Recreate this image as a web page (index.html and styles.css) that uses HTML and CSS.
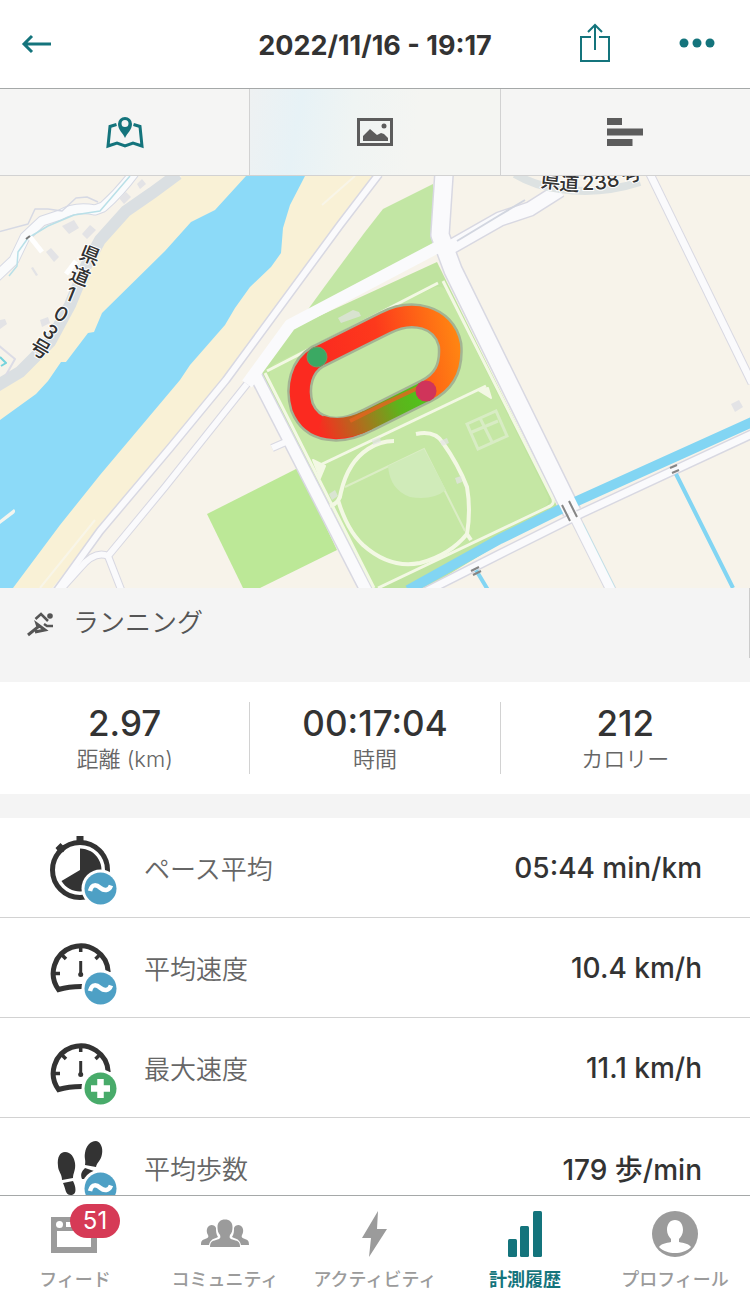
FILE: index.html
```html
<!DOCTYPE html>
<html lang="ja">
<head>
    <meta charset="UTF-8">
    <meta name="viewport" content="width=device-width, initial-scale=1.0">
    <title>計測履歴</title>
    <link rel="stylesheet" href="styles.css">
</head>
<body>
    <header class="topbar">
        <button class="icon-button" aria-label="戻る">
            <svg width="34" height="24" viewBox="0 0 34 24" fill="none" stroke="currentColor" stroke-width="3">
                <path d="M31 12H4M12 4L4 12l8 8"/>
            </svg>
        </button>
        <h1>2022/11/16 - 19:17</h1>
        <div class="actions">
            <button class="icon-button" aria-label="共有">
                <svg width="32" height="42" viewBox="0 0 32 42" fill="none" stroke="currentColor" stroke-width="2">
                    <path d="M12 14H2v24h28V14H20M16 27V3M9 9l7-7 7 7"/>
                </svg>
            </button>
            <button class="icon-button" aria-label="メニュー">
                <svg width="36" height="14" viewBox="0 0 36 14" fill="currentColor">
                    <circle cx="5" cy="6" r="4.500"/><circle cx="18" cy="6" r="4.500"/><circle cx="31" cy="6" r="4.500"/>
                </svg>
            </button>
        </div>
    </header>

    <main>
        <div class="tabs">
            <button class="tab active" aria-label="マップ">
                <svg width="40" height="34" viewBox="0 0 40 34" fill="none" stroke="currentColor" stroke-width="3">
                    <path d="M11.500 9.500L5 11.500 3 31l9-3 8 3 8-3 9 3-2-19.500-6.500-2"/>
                    <path d="M20 23c-2-5-7-8-7-14a7 7 0 0 1 14 0c0 6-5 9-7 14zM20 5a3.500 3.500 0 1 0 0 7 3.500 3.500 0 0 0 0-7z" fill="currentColor" fill-rule="evenodd" stroke="none"/>
                </svg>
            </button>
            <button class="tab photo" aria-label="写真">
                <svg width="36" height="28" viewBox="0 0 36 28" fill="currentColor">
                    <path d="M0 0h36v28H0zM3 3v22h30V3z" fill-rule="evenodd"/>
                    <path d="M6 23v-5l7-7 7 6 4-2 3 1 4 4v3z"/>
                    <circle cx="27" cy="8" r="2.500"/>
                </svg>
            </button>
            <button class="tab" aria-label="ラップ">
                <svg width="36" height="28" viewBox="0 0 36 28" fill="currentColor">
                    <path d="M0 0h15v7H0zM0 10.500h36v7H0zM0 21h25.500v7H0z"/>
                </svg>
            </button>
        </div>

        <svg class="map" viewBox="0 176 750 412" preserveAspectRatio="xMidYMid slice" role="img" aria-label="コース">
            <defs>
                <linearGradient id="fast" gradientUnits="userSpaceOnUse" x1="317" y1="357" x2="455" y2="330">
                    <stop offset="0" stop-color="#fb2a20"/>
                    <stop offset=".45" stop-color="#fd391c"/>
                    <stop offset=".8" stop-color="#fe6a15"/>
                    <stop offset="1" stop-color="#ff8412"/>
                </linearGradient>
                <linearGradient id="slow" gradientUnits="userSpaceOnUse" x1="424" y1="392" x2="318" y2="428">
                    <stop offset="0" stop-color="#4fc41a"/>
                    <stop offset=".25" stop-color="#5cb41c"/>
                    <stop offset=".6" stop-color="#a8741d"/>
                    <stop offset="1" stop-color="#fb2a20"/>
                </linearGradient>
            </defs>

            <rect y="176" width="750" height="412" fill="#f7f3ea"/>

            <!-- river and its banks -->
            <path class="sand" d="M182 176H378L250 345 160 460 52 588H0V385L40 355 58 315 100 240 125 215z"/>
            <path class="water" d="M246 176L215 210 191 222 165 251 102 313 94 332 88 333 66 362 61 362 48 381 36 394 0 420V588H13L60 525 100 475 180 380 190 365 225 325 235 308 250 287 271 267 281 253 283 228 290 205 305 176z"/>
            <path d="M0 520L14 509q3 3-2 6L0 524z" fill="#f4f5ef"/>
            <path d="M322 205L355 176M40 588L95 520" stroke="#f8f5e8" stroke-width="2"/>

            <!-- prefectural road 103 and the stream -->
            <path d="M178 174L152 193 126 211 100 240 86 266 70 305 50 342 20 372-5 387" fill="none" stroke="#dadfe2" stroke-width="12"/>
            <g fill="none" stroke-linejoin="round">
                <path d="M134 173Q120 192 103 207L95 210Q75 206 60 215L42 221 25 237 14 260-5 278" stroke="#d6d9e4" stroke-width="11"/>
                <path d="M134 173Q120 192 103 207L95 210Q75 206 60 215L42 221 25 237 14 260-5 278" stroke="#fafbfc" stroke-width="9"/>
                <path d="M-2 232L28 224 35 209 48 209 62 211 76 198 87 197 98 202" stroke="#d6d9e4" stroke-width="1.500"/>
                <path d="M130 176L100 211 74 215 48 226 28 238 18 252 17 266 9 276" stroke="#b9e0e8" stroke-width="1.500"/>
                <path d="M0 357l6 6-5 3" stroke="#75d3dc" stroke-width="2"/>
                <path d="M30 237l12 15M66 274l10-13" stroke="#fff" stroke-width="5"/>
                <path d="M-2 345L15 359 6 375" stroke="#dcdce6" stroke-width="2"/>
            </g>
            <path d="M26 239l4-3" stroke="#777" stroke-width="2"/>
            <path class="building" d="M62 226l12-6 5 8-10 6zM82 234l8-9 6 5-9 9zM119 198l7-6 5 5-7 7zM137 184l5-5 4 5-6 5zM46 252l5-4 8 9-5 5zM0 320l5-1 2 5-7 5zM31 268l2-1 5 8-2 1zM40 320l8-3 2 6-8 4z"/>

            <!-- fields -->
            <path d="M433 184L383 209 365 232 325 286 304 315 433 247z" fill="#c2e6a4"/>
            <path d="M207 514L298 468 337 550 260 588H243z" fill="#bce897"/>
            <path d="M293 328L437 262 558 508 420 592H366L261 372z" fill="#bfe39f"/>
            <path d="M270 372Q270 366 276 363L433 288Q442 284 447 292L548 496Q551 503 544 507L378 588H370L270 382z" fill="#c5e7a4"/>

            <!-- roads -->
            <g class="road-edge">
                <path d="M379 174L340 225 226 380 170 448 100 531 56 592" stroke-width="9"/>
                <path d="M438 247L290 325 247 384 165 487 108 556 M108 556L122 592 M108 556Q95 550 80 568L62 588" stroke-width="8"/>
                <path d="M255 374L367 592" stroke-width="14"/>
                <path d="M449 248L500 219 530 209 560 190" stroke-width="16"/>
                <path d="M650 174L752 383" stroke-width="9"/>
                <path d="M444 174L440 235 453 270 572 512" stroke-width="20"/>
                <path d="M572 512L612 592" stroke-width="11"/>
                <path d="M752 434L580 514 500 554 425 592" stroke-width="10"/>
                <path d="M272 448l16-7" stroke-width="8"/>
            </g>
            <path d="M752 422L575 502 500 539 408 590" fill="none" stroke="#82d5f3" stroke-width="10"/>
            <path d="M676 474L733 588M476 570L488 590" stroke="#82d5f3" stroke-width="4"/>
            <path d="M582 524L614 588" stroke="#b7e4e9" stroke-width="3"/>
            <g class="road">
                <path d="M379 174L340 225 226 380 170 448 100 531 56 592" stroke-width="6"/>
                <path d="M247 384L165 487 108 556 M108 556L122 592 M108 556Q95 550 80 568L62 588" stroke-width="6"/>
                <path d="M438 247L290 325 247 384" stroke-width="12"/>
                <path d="M255 374L367 592" stroke-width="11"/>
                <path d="M449 248L500 219 530 209 560 190" stroke-width="13"/>
                <path d="M650 174L752 383" stroke-width="7"/>
                <path d="M444 174L440 235 453 270 572 512" stroke-width="17"/>
                <path d="M572 512L612 592" stroke-width="9"/>
                <path d="M752 434L580 514 500 554 425 592" stroke-width="7"/>
                <path d="M272 448l16-7" stroke-width="6"/>
            </g>
            <path d="M457 241L500 215 525 200" stroke="#d2d6e0" stroke-width="2" fill="none"/>
            <path d="M515 174Q535 186 560 189Q600 195 640 182" stroke="#dde2e2" stroke-width="8" fill="none"/>
            <path d="M562 505l8 16M569 501l8 16M670 468l7-3M672 473l7-3M471 571l8-4M473 575l8-4" stroke="#858585" stroke-width="2"/>
            <path class="building" d="M731 404l8-4 4 7-8 5z"/>

            <!-- paths inside the park -->
            <g class="path">
                <path d="M267 371L438 283M443 281L552 497Q556 504 548 507L378 588M265 373L374 588" stroke-width="3"/>
                <path d="M318 466L486 386" stroke-width="3"/>
                <path d="M330 506Q340 503 341 492 348 462 368 449 380 441 394 441M416 434Q435 430 443 443 458 464 467 487 471 510 467 534L471 540M338 500Q347 530 363 545 390 569 420 563 450 555 467 534" stroke-width="4"/>
                <path d="M313 460l12 6-5 12zM478 390l10-2 3 10z" fill="#f3f8e4" stroke-width="2"/>
            </g>
            <path d="M345 487L424 449 465 531" fill="none" stroke="#dbedc5" stroke-width="2"/>
            <path d="M424 449L388 466Q390 490 410 497 432 501 446 490z" fill="#d0ebb9"/>
            <path d="M467 424l29-13 11 25-29 13zM472 432l26-11M480 418l12 24" fill="none" stroke="#d8ecc4" stroke-width="3"/>
            <path class="building" d="M338 318l15-8 6 2 2 4-20 7zM329 494l6-4 3 6-6 4zM440 441l7-3 2 5-7 3zM455 478l6-2 1 6-5 2zM372 440l8-3 1 5-8 3z" opacity=".7"/>

            <!-- recorded track -->
            <path d="M317 357L385 323C412 309 444 316 450 345 452 368 444 382 426 391L368 420C340 435 312 432 302 407 296 386 302 366 317 357z" class="casing"/>
            <g class="track">
                <path d="M368 420C340 435 312 432 302 407 296 386 302 366 317 357" stroke="#fb2a20"/>
                <path d="M317 357L385 323C412 309 444 316 450 345 452 368 444 382 426 391" stroke="url(#fast)"/>
                <path d="M426 391L368 420C352 428 336 431 320 425" stroke="url(#slow)"/>
            </g>
            <path d="M422 386L384 404 350 421" stroke="#e6631f" stroke-width="4" fill="none" opacity=".8"/>
            <circle cx="317" cy="357" r="10" fill="#3ba963" stroke="#6c9a68" stroke-width="1"/>
            <circle cx="426" cy="391" r="10.500" fill="#d0345a"/>

            <text class="map-label" x="78 68 64 52 41 28" y="258 279 299 317 333 350" rotate="22 22 22 30 42 30">県道103号</text>
            <text class="map-label" x="540 559 582 595 608 624" y="187 190 190 190 188 184" rotate="6 3 0 -6 -12 -18">県道238号</text>
        </svg>

        <section class="activity">
            <svg width="28" height="28" viewBox="0 0 28 28" fill="none" stroke="currentColor" stroke-width="2.500">
                <path d="M8.500 10L14 5l7 7M17 15l3 2h6"/>
                <path d="M1 26l10-8-1-3 8 6-10 2" stroke-width="3"/>
                <circle cx="23" cy="7" r="2.800" fill="currentColor" stroke="none"/>
            </svg>
            <h2>ランニング</h2>
        </section>

        <section class="summary">
            <div class="stat"><strong>2.97</strong><span>距離 (km)</span></div>
            <div class="stat"><strong>00:17:04</strong><span>時間</span></div>
            <div class="stat"><strong>212</strong><span>カロリー</span></div>
        </section>

        <!-- shared badge and gauge shapes -->
        <svg class="sprite" aria-hidden="true">
            <symbol id="average" viewBox="0 0 72 76">
                <circle cx="52.500" cy="58.500" r="19" fill="#fff"/>
                <circle cx="52.500" cy="58.500" r="16" fill="#4ea0c5"/>
                <path d="M42 61C44 53 49 55 52.500 58S61 61 63 55.500" fill="none" stroke="#fff" stroke-width="4.500"/>
            </symbol>
            <symbol id="gauge" viewBox="0 0 72 76">
                <g fill="none" stroke="#333" stroke-width="5">
                    <path d="M60.200 42A27.500 27.500 0 1 0 10.500 59.500Q22 56 37 56.500"/>
                    <path d="M32.700 16v6M14 25l4 4M51.500 25l-4 4M5 43.500h7" stroke-width="3.500"/>
                    <path d="M32.700 31v13" stroke-width="3"/>
                </g>
                <circle cx="32.700" cy="44.500" r="2.500" fill="#333"/>
            </symbol>
        </svg>

        <ul class="details">
            <li>
                <svg width="72" height="76" viewBox="0 0 72 76">
                    <circle cx="32" cy="40" r="27.500" fill="none" stroke="#333" stroke-width="5"/>
                    <path d="M32 40V18.500A21.500 21.500 0 1 1 13.500 51z" fill="#333"/>
                    <path d="M28.500 6h7v8h-7zM7.500 18l5-5 5 5-2 4-4 1z" fill="#333"/>
                    <use href="#average"/>
                </svg>
                <span class="name">ペース平均</span>
                <span class="value">05:44 min/km</span>
            </li>
            <li>
                <svg width="72" height="76" viewBox="0 0 72 76">
                    <use href="#gauge"/>
                    <use href="#average"/>
                </svg>
                <span class="name">平均速度</span>
                <span class="value">10.4 km/h</span>
            </li>
            <li>
                <svg width="72" height="76" viewBox="0 0 72 76">
                    <use href="#gauge"/>
                    <circle cx="52.500" cy="58.500" r="19" fill="#fff"/>
                    <circle cx="52.500" cy="58.500" r="16" fill="#48ab6a"/>
                    <path d="M52.500 49v19M43 58.500h19" stroke="#fff" stroke-width="6.500"/>
                </svg>
                <span class="name">最大速度</span>
                <span class="value">11.1 km/h</span>
            </li>
            <li>
                <svg width="72" height="76" viewBox="0 0 72 76" fill="#333">
                    <path d="M10 36C9 27 12 22 17 22c6 0 9 5 10 11 1 7-2 10-2 15l-11 2c0-6-4-9-4-14zM15 53l10-2c3 6 4 13-1 14-7 1-6-6-9-12z"/>
                    <path d="M37 23c1-7 5-12 11-12 5 1 7 7 6 13-1 7-5 8-6 13l-11-2c1-5-1-7 0-12zM37 38l9 3-4 8h-8c-2-5 0-8 3-11z"/>
                    <use href="#average"/>
                </svg>
                <span class="name">平均歩数</span>
                <span class="value">179 歩/min</span>
            </li>
        </ul>
    </main>

    <nav class="bottom-nav">
        <a href="#feed">
            <svg width="48" height="48" viewBox="0 0 48 48" fill="currentColor">
                <path d="M0 7h46v36H0zM6 21v16h34V21z" fill-rule="evenodd"/>
                <circle cx="8.500" cy="14.500" r="3.500" fill="#fff"/><path d="M15 12h25v5H15z" fill="#fff"/>
            </svg>
            <span class="badge">51</span>
            <span>フィード</span>
        </a>
        <a href="#community">
            <svg width="48" height="48" viewBox="0 0 48 48" fill="currentColor">
                <path d="M9 37c0-5 2-6 6-7 4-1 5-2 4-5-2-2-2.500-5-2.500-8 0-5 3-7.500 7.500-7.500s7.500 2.500 7.500 7.500c0 3-.5 6-2.500 8-1 3 0 4 4 5s6 2 6 7z"/>
                <path d="M0 35c0-4 1-5 4-6s4-2 3-4c-2-3-2-9 3.500-10 2 0 4 1 4.500 3 0 3 0 6 2 9l-2 1c-4 1-6 3-7 7zM48 35c0-4-1-5-4-6s-4-2-3-4c2-3 2-9-3.500-10-2 0-4 1-4.500 3 0 3 0 6-2 9l2 1c4 1 6 3 7 7z"/>
            </svg>
            <span>コミュニティ</span>
        </a>
        <a href="#activity">
            <svg width="48" height="48" viewBox="0 0 48 48" fill="currentColor">
                <path d="M27 1L11 28h9l-2 19L36 19H26z"/>
            </svg>
            <span>アクティビティ</span>
        </a>
        <a href="#history" class="active">
            <svg width="48" height="48" viewBox="0 0 48 48" fill="currentColor">
                <rect x="7" y="29" width="9" height="18" rx="1.500"/>
                <rect x="19" y="16" width="9" height="31" rx="1.500"/>
                <rect x="32" y="1" width="9" height="46" rx="1.500"/>
            </svg>
            <span>計測履歴</span>
        </a>
        <a href="#profile">
            <svg width="48" height="48" viewBox="0 0 48 48">
                <circle cx="24" cy="24" r="23" fill="currentColor"/>
                <path d="M24 10c5 0 8 4 8 10 0 4-2 7-4 9v3c5 1 10 2 12 5-4 4-10 6-16 6s-12-2-16-6c2-3 7-4 12-5v-3c-2-2-4-5-4-9 0-6 3-10 8-10z" fill="#fff"/>
            </svg>
            <span>プロフィール</span>
        </a>
    </nav>
</body>
</html>
```

FILE: styles.css
```css
:root {
    --teal: #14747c;
    --text-color: #333333;
    --muted: #666666;
    --gray: #9b9b9b;
    --bg-color: #f4f4f4;
    --line: #d2d2d2;
}
* {
    box-sizing: border-box;
}
body {
    font-family: Inter, 'Noto Sans CJK JP', sans-serif;
    background-color: white;
    color: var(--text-color);
    margin: 0;
    height: 100vh;
    display: flex;
    flex-direction: column;
}
h1, h2, ul {
    margin: 0;
    padding: 0;
}
button {
    background: none;
    border: none;
    padding: 0;
    cursor: pointer;
}
svg {
    display: block;
    flex: none;
}
.topbar {
    display: grid;
    grid-template-columns: 1fr auto 1fr;
    align-items: center;
    height: 89px;
    padding: 0 20px;
    border-bottom: 1px solid #a5a8a8;
    flex: none;
}
.topbar h1 {
    padding-top: 4px;
    font-size: 27px;
    line-height: 36px;
    font-weight: 700;
}
.icon-button {
    color: var(--teal);
    justify-self: start;
}
.actions {
    display: flex;
    align-items: center;
    justify-content: flex-end;
    gap: 68px;
    margin-right: 15px;
}
main {
    flex: 1;
    min-height: 0;
    overflow-y: auto;
    scrollbar-width: none;
    background-color: var(--bg-color);
}
.tabs {
    display: flex;
    height: 87px;
    border-bottom: 1px solid var(--line);
}
.tab {
    flex: 1;
    display: flex;
    align-items: center;
    justify-content: center;
    color: #5c5c5c;
    background-color: #f5f5f4;
}
.tab:not(:last-child) {
    border-right: 1px solid var(--line);
}
.tab.active {
    color: var(--teal);
}
.tab.photo {
    background: linear-gradient(100deg, #eef1f2, #e7f2f6 20%, #eff4f3 40%, #f4f5f2 65%);
}
.map {
    width: 100%;
    height: 412px;
}
.sand {
    fill: #f9f1d6;
}
.water {
    fill: #8cdaf8;
}
.building {
    fill: #e3e3e6;
}
.road, .road-edge, .path {
    fill: none;
    stroke-linejoin: round;
}
.road-edge {
    stroke: #d8d8e2;
}
.road {
    stroke: #fafafc;
}
.path {
    stroke: #f3f8e4;
}
.casing {
    fill: none;
    stroke: #a3b493;
    stroke-width: 25;
}
.track {
    fill: none;
    stroke-width: 20;
}
.map-label {
    font-family: Inter, 'Noto Sans CJK JP', sans-serif;
    font-size: 20px;
    font-weight: 500;
    fill: #333;
    stroke: white;
    stroke-width: 2;
    paint-order: stroke;
}
.activity {
    display: flex;
    align-items: center;
    gap: 18px;
    height: 70px;
    padding-left: 27px;
    margin-bottom: 24px;
    border-right: 1px solid #cccccc;
    color: #555555;
}
.activity h2 {
    font-size: 26px;
    line-height: 36px;
    font-weight: 350;
}
.summary {
    display: flex;
    padding: 20px 0;
    margin-bottom: 24px;
    background-color: white;
}
.stat {
    flex: 1;
    display: flex;
    flex-direction: column;
    text-align: center;
}
.stat:not(:last-child) {
    border-right: 1px solid var(--line);
}
.stat strong {
    font-size: 35px;
    line-height: 42px;
    font-weight: 500;
}
.stat span {
    font-size: 22px;
    line-height: 30px;
    font-weight: 350;
    color: var(--muted);
}
.sprite {
    position: absolute;
    width: 0;
    height: 0;
}
.details {
    list-style: none;
    background-color: white;
}
.details li {
    display: flex;
    align-items: center;
    gap: 24px;
    height: 100px;
    padding: 0 48px;
    border-bottom: 1px solid var(--line);
}
.name {
    flex: 1;
    font-size: 26px;
    font-weight: 350;
    color: var(--muted);
}
.value {
    font-size: 28px;
    font-weight: 500;
}
.bottom-nav {
    display: flex;
    height: 99px;
    padding-top: 14px;
    border-top: 1px solid #a5a8a8;
    flex: none;
}
.bottom-nav a {
    flex: 1;
    position: relative;
    display: flex;
    flex-direction: column;
    align-items: center;
    gap: 10px;
    font-size: 18px;
    line-height: 24px;
    font-weight: 500;
    color: var(--gray);
    text-decoration: none;
    white-space: nowrap;
}
.bottom-nav .active {
    color: var(--teal);
    font-weight: 700;
}
.badge {
    position: absolute;
    top: -6px;
    left: 50%;
    width: 50px;
    margin-left: -5px;
    border-radius: 17px;
    background-color: #d63a56;
    color: white;
    font-size: 24px;
    line-height: 34px;
    font-weight: 400;
    text-align: center;
}
```
